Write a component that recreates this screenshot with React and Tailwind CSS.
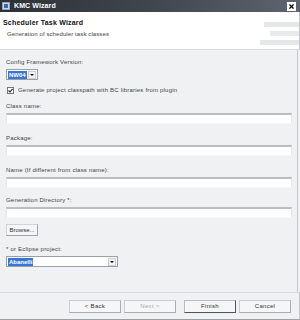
import { X } from 'lucide-react'

const font = { fontFamily: '"Liberation Sans", Arial, sans-serif' }

const Field = ({ label, className = '' }) => (
  <div className={className}>
    <div className="text-[6px] leading-[8px] text-[#444] tracking-[0.2px]">{label}</div>
    <div className="mt-[3px] h-[11px] w-[286px] bg-white border-t-2 border-[#b9bec4] border-x border-x-[#e4e6e9] border-b border-b-[#f6f7f8]" />
  </div>
)

const Combo = ({ value, width }) => (
  <div className={`flex items-center h-[11px] bg-white border border-[#9aa0a6] ${width}`}>
    <span className="ml-[1px] px-[1px] bg-[#3875d7] text-white text-[6px] leading-[8px] font-bold">{value}</span>
    <div className="ml-auto mr-[1px] w-[8px] h-[8px] flex items-center justify-center border border-[#c9ccd0] bg-[#f3f4f5]">
      <div className="w-0 h-0 border-l-[2px] border-r-[2px] border-t-[2px] border-l-transparent border-r-transparent border-t-black" />
    </div>
  </div>
)

const Btn = ({ children, disabled, primary }) => (
  <div
    className={`w-[52px] h-[13px] flex items-center justify-center text-[6px] tracking-[0.3px] bg-[#f5f6f7] ${
      primary ? 'border border-[#555] border-t-[#bbb] border-l-[#bbb]' : 'border border-[#c9cdd2] border-r-[#a8adb3] border-b-[#a8adb3]'
    } ${disabled ? 'text-[#aaa]' : 'text-[#333]'}`}
  >
    {children}
  </div>
)

export default function App() {
  return (
    <div className="w-[300px] h-[320px] flex flex-col bg-[#f0f1f3] overflow-hidden" style={font}>
      {/* title bar */}
      <div className="h-[12px] flex items-center bg-gradient-to-r from-[#2d3137] via-[#40464e] to-[#5d6570]">
        <div className="ml-[2px] w-[8px] h-[8px] bg-[#c9d6e6] border border-[#8fa4bd] flex items-center justify-center">
          <div className="w-[4px] h-[4px] bg-[#3b6aa8]" />
        </div>
        <span className="ml-[4px] text-white text-[7px] font-bold tracking-[0.1px]">KMC Wizard</span>
        <div className="ml-auto mr-[4px] w-[9px] h-[9px] bg-white flex items-center justify-center">
          <X size={7} strokeWidth={4} className="text-black" />
        </div>
      </div>

      {/* header */}
      <div className="h-[38px] flex bg-white border-b border-[#d9dcdf] border-r border-r-[#c4c8cc]">
        <div className="pl-[3px] pt-[6px]">
          <div className="text-[7px] leading-[9px] font-bold text-[#111] tracking-[0.2px]">Scheduler Task Wizard</div>
          <div className="mt-[3px] pl-[4px] text-[6px] leading-[8px] text-[#444] tracking-[0.1px]">Generation of scheduler task classes</div>
        </div>
        <div className="ml-auto flex flex-col items-end gap-[4px] pt-[10px]">
          <div className="w-[35px] h-[5px] bg-[#e6e7e9]" />
          <div className="w-[29px] h-[5px] bg-[#e9eaec]" />
          <div className="w-[39px] h-[5px] bg-[#e6e7e9]" />
        </div>
      </div>

      {/* body */}
      <div className="flex-1 flex flex-col pl-[6px] pt-[8px] border-r border-[#c4c8cc] mr-[2px]">
        <div className="text-[6px] leading-[8px] text-[#444] tracking-[0.2px]">Config Framework Version:</div>
        <div className="mt-[3px]">
          <Combo value="NW04" width="w-[32px]" />
        </div>
        <div className="mt-[6px] flex items-center">
          <div className="w-[7px] h-[7px] ml-[1px] bg-white border border-[#777] flex items-center justify-center">
            <svg width="5" height="5" viewBox="0 0 5 5"><path d="M0.5 2.5 L2 4 L4.5 0.8" fill="none" stroke="#222" strokeWidth="1.1" /></svg>
          </div>
          <span className="ml-[4px] text-[6px] leading-[8px] text-[#444] tracking-[0.2px]">Generate project classpath with BC libraries from plugin</span>
        </div>
        <Field label="Class name:" className="mt-[8px]" />
        <Field label="Package:" className="mt-[10px]" />
        <Field label="Name (If different from class name):" className="mt-[10px]" />
        <Field label="Generation Directory *:" className="mt-[8px]" />
        <div className="mt-[6px] w-[32px] h-[12px] flex items-center justify-center text-[6px] text-[#333] bg-[#f5f6f7] border border-[#d0d3d7] border-r-[#9fa4aa] border-b-[#9fa4aa]">
          Browse...
        </div>
        <div className="mt-[9px] text-[6px] leading-[8px] text-[#444] tracking-[0.2px]">* or Eclipse project:</div>
        <div className="mt-[3px]">
          <Combo value="Abanelli" width="w-[112px]" />
        </div>
      </div>

      {/* footer */}
      <div className="h-[28px] flex items-center justify-end gap-[3px] pr-[8px] border-t border-[#d9dcdf] border-b border-b-[#9aa0a6] border-r border-r-[#c4c8cc]">
        <Btn>&lt; Back</Btn>
        <Btn disabled>Next &gt;</Btn>
        <div className="w-[2px]" />
        <Btn primary>Finish</Btn>
        <Btn>Cancel</Btn>
      </div>
    </div>
  )
}
